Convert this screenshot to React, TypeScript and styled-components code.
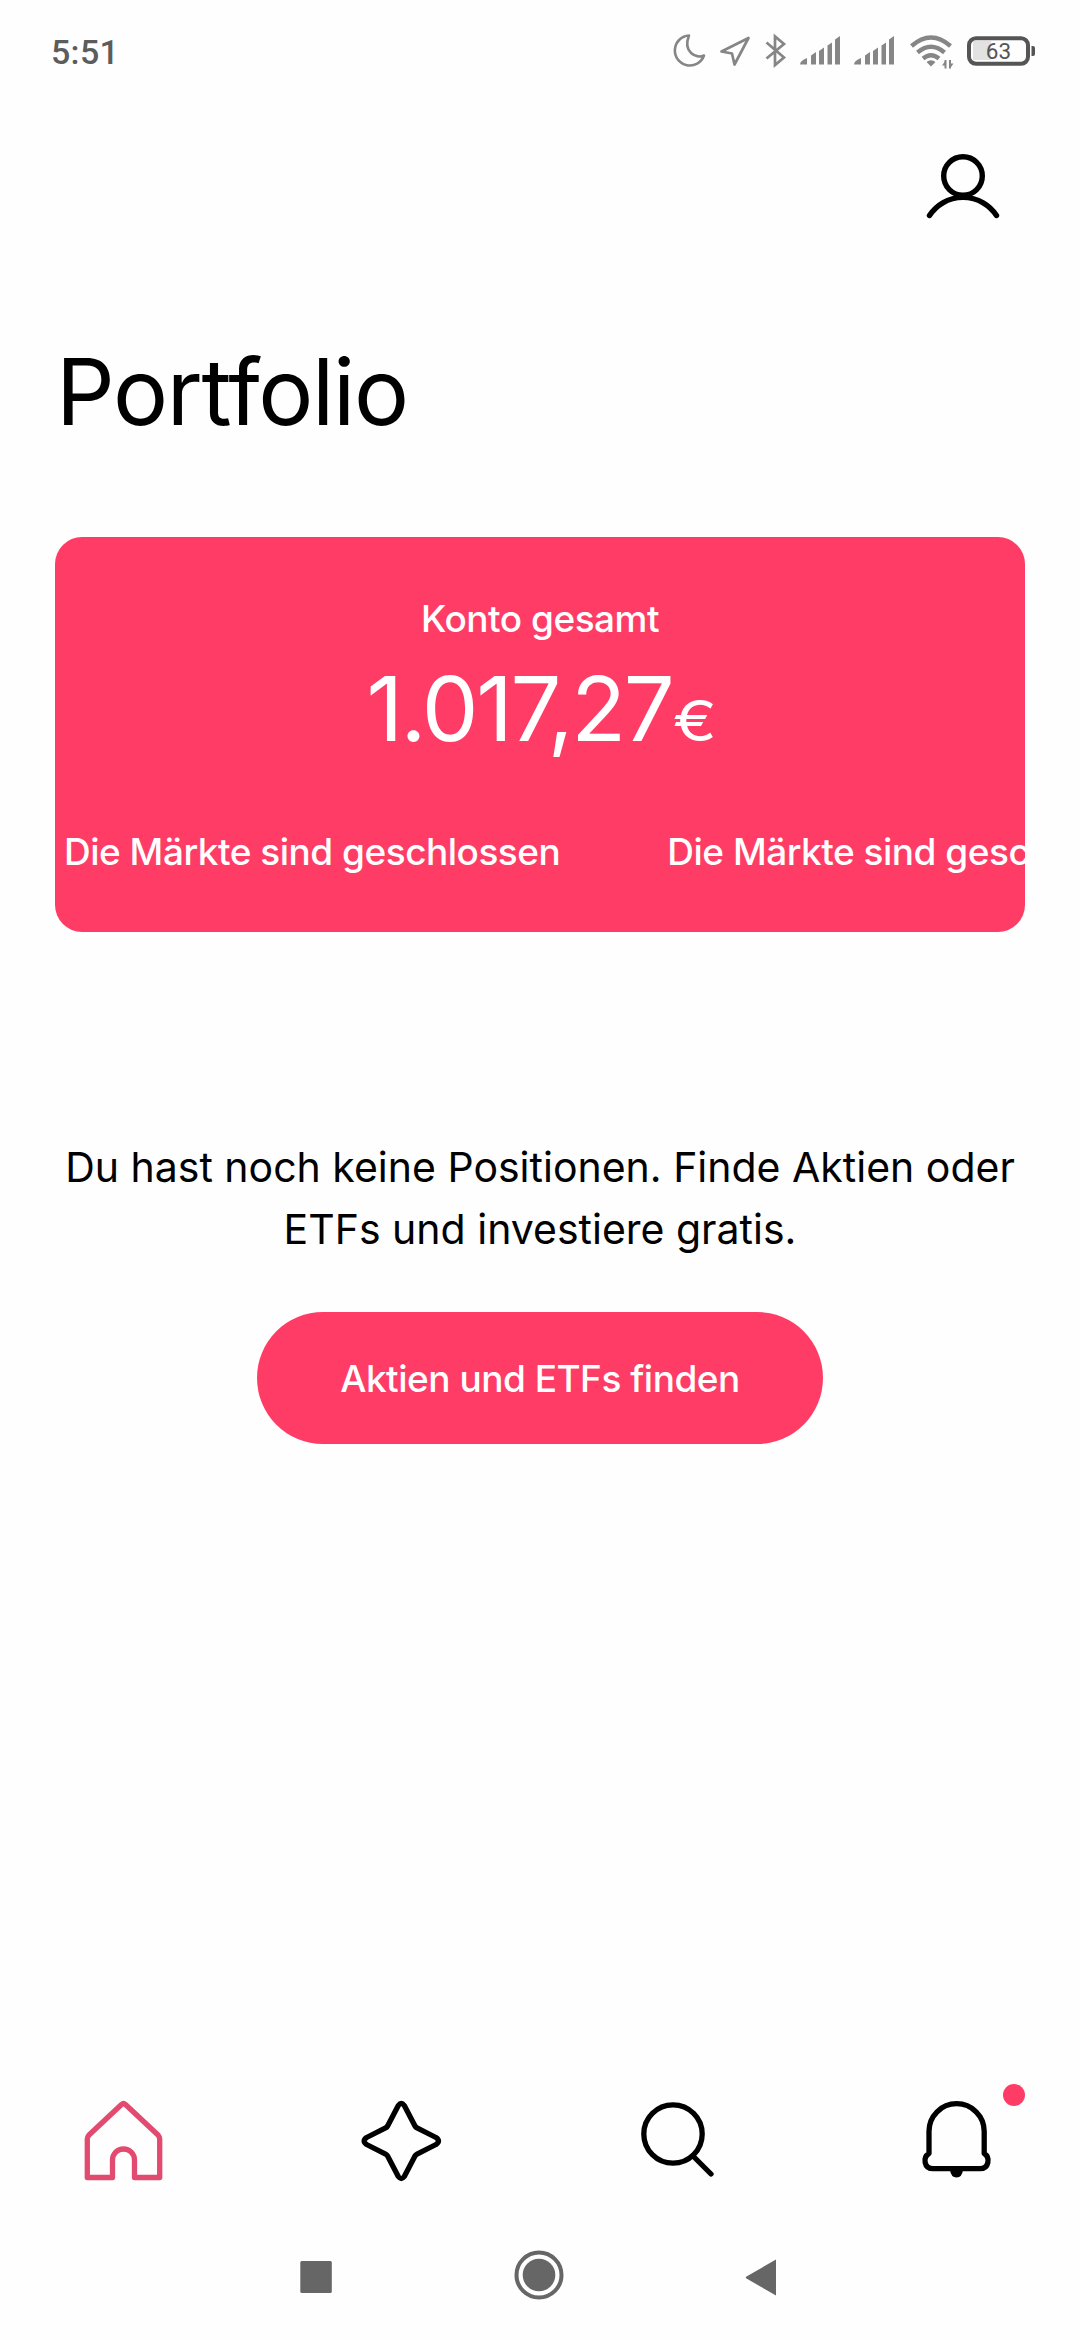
import React from "react";
import styled, { createGlobalStyle } from "styled-components";

const PINK = "#ff3c66";

const GlobalStyle = createGlobalStyle`
  html, body { margin: 0; padding: 0; background: #fefefe; }
  * { box-sizing: border-box; }
  svg { display: block; flex: none; }
`;

const Screen = styled.main`
  width: 1080px;
  height: 2340px;
  display: flex;
  flex-direction: column;
  background: #fefefe;
  color: #000;
  font-family: Inter, "Liberation Sans", sans-serif;
  overflow: hidden;
`;

const StatusBar = styled.header`
  height: 104px;
  padding: 0 45px 0 51px;
  display: flex;
  justify-content: space-between;
  align-items: center;
  flex: none;
`;

const Clock = styled.span`
  font: 500 34px/40px Roboto, sans-serif;
  letter-spacing: 0.3px;
  color: #5c5c5c;
`;

const StatusIcons = styled.div`
  display: flex;
  align-items: center;
  height: 40px;
  margin-bottom: 4px;
`;

const Glyph = styled.svg<{ $gap?: number }>`
  margin-left: ${(p) => p.$gap ?? 0}px;
`;

const TopBar = styled.div`
  height: 168px;
  padding: 46px 79px 0 0;
  display: flex;
  justify-content: flex-end;
  align-items: flex-start;
  flex: none;
`;

const IconButton = styled.button`
  border: 0;
  padding: 0;
  background: none;
  color: inherit;
  display: flex;
`;

const Title = styled.h1`
  margin: 65px 0 0 56px;
  height: 110px;
  font-size: 92px;
  line-height: 110px;
  font-weight: 400;
  letter-spacing: -1.3px;
  flex: none;
`;

const Card = styled.section`
  margin: 90px 55px 0;
  height: 395px;
  border-radius: 27px;
  background: ${PINK};
  color: #fff;
  display: flex;
  flex-direction: column;
  align-items: center;
  overflow: hidden;
  flex: none;
`;

const CardLabel = styled.div`
  margin-top: 58px;
  font-size: 37px;
  line-height: 48px;
  font-weight: 500;
  letter-spacing: -0.5px;
`;

const Amount = styled.div`
  margin-top: 11px;
  height: 110px;
  display: flex;
  align-items: baseline;
  font-size: 90px;
  line-height: 110px;
  font-weight: 400;
  letter-spacing: -2.4px;
`;

const Currency = styled.span`
  font-size: 56px;
  font-weight: 400;
  letter-spacing: 0;
  margin-left: 4px;
  transform: scaleX(1.18);
`;

const Ticker = styled.div`
  margin-top: 64px;
  width: 100%;
  padding-left: 9px;
  display: flex;
  gap: 107px;
  white-space: nowrap;
`;

const TickerItem = styled.span`
  flex: none;
  font-size: 37px;
  line-height: 48px;
  font-weight: 500;
  letter-spacing: -0.5px;
`;

const Empty = styled.section`
  margin-top: 204px;
  display: flex;
  flex-direction: column;
  align-items: center;
  flex: none;
`;

const Message = styled.p`
  margin: 0;
  font-size: 41px;
  line-height: 62px;
  font-weight: 400;
  text-align: center;
  letter-spacing: 0px;
  white-space: nowrap;
`;

const Action = styled.button`
  margin-top: 52px;
  width: 566px;
  height: 132px;
  padding: 1px 0 0;
  border: 0;
  border-radius: 66px;
  background: ${PINK};
  color: #fff;
  font: 500 37px/48px Inter, "Liberation Sans", sans-serif;
  letter-spacing: -0.5px;
`;

const Tabs = styled.nav`
  margin-top: auto;
  height: 120px;
  padding: 8px 80px 0 80px;
  display: flex;
  justify-content: space-between;
  align-items: flex-start;
  flex: none;
`;

const Tab = styled(IconButton)<{ $active?: boolean }>`
  position: relative;
  color: ${(p) => (p.$active ? "#e24a70" : "#000")};
`;

const Badge = styled.span`
  position: absolute;
  left: 89px;
  top: -14px;
  width: 22px;
  height: 22px;
  border-radius: 50%;
  background: ${PINK};
`;

const SystemBar = styled.footer`
  height: 130px;
  padding: 0 303px 0 300px;
  display: flex;
  justify-content: space-between;
  align-items: center;
  flex: none;
`;

const Signal = ({ gap }: { gap: number }) => (
  <Glyph $gap={gap} width="40" height="40" fill="#868686">
    <path d="M0 34.500c0-2.200 2-4 4-5l3-1.500v6.500z" />
    <path d="M11 25.500l5-3.500v12.500h-5zM19 21l5-3.500v17h-5zM27.500 15.500l4.500-3v22h-4.500zM35 9.500l5-3.500v28.500h-5z" />
  </Glyph>
);

export default function App() {
  return (
    <Screen>
      <GlobalStyle />
      <StatusBar>
        <Clock>5:51</Clock>
        <StatusIcons>
          <Glyph width="34" height="40" fill="none" stroke="#868686" strokeWidth="2.600" strokeLinejoin="round">
            <path d="M17 5.500A15 15 0 1 0 32 25.500C24 29 10.500 22 17 5.500Z" />
          </Glyph>
          <Glyph $gap={14} width="31" height="40" fill="none" stroke="#868686" strokeWidth="2.700" strokeLinejoin="round">
            <path d="M28.500 8L14.500 34.500L12 23.500L1.500 21.500Z" />
          </Glyph>
          <Glyph $gap={14} width="22" height="40" fill="none" stroke="#868686" strokeWidth="2.700">
            <path d="M1.500 12.500L19 27.500L10 35V6.500L19 14L1.500 28.500" />
          </Glyph>
          <Signal gap={13} />
          <Signal gap={14} />
          <Glyph $gap={16} width="44" height="40" fill="none" stroke="#868686" strokeWidth="4.400">
            <path d="M1.500 16Q21 -1 40.500 16M7.500 22.500Q21 11 34.500 22.500M13 28.500Q21 22 29 28.500" />
            <path d="M16.500 32Q21 28.500 25.500 32L21 36.500Z" fill="#868686" stroke="none" />
            <path d="M35.500 30v8.500M40 30v8.500" strokeWidth="2" />
            <path d="M32 35.500l3.500-5v5zM43.500 33.500l-3.500 5v-5z" fill="#868686" stroke="none" />
          </Glyph>
          <Glyph $gap={12} width="69" height="40">
            <rect x="7" y="11" width="18" height="19" fill="#e2e2e2" />
            <rect x="3" y="8.200" width="59" height="25.600" rx="7" fill="none" stroke="#555" strokeWidth="4" />
            <path d="M65.500 16h1.500q2 0 2 2v6q0 2-2 2h-1.500z" fill="#555" />
            <text x="32.500" y="29" textAnchor="middle" fontFamily="Roboto, sans-serif" fontSize="22.500" fill="#555">63</text>
          </Glyph>
        </StatusIcons>
      </StatusBar>

      <TopBar>
        <IconButton aria-label="Profil">
          <svg width="76" height="72" viewBox="0 0 76 72" fill="none" stroke="#000" strokeWidth="5.400" strokeLinecap="round">
            <circle cx="38" cy="26" r="19.300" />
            <path d="M4.500 65.500A40 40 0 0 1 71.500 65.500" />
          </svg>
        </IconButton>
      </TopBar>

      <Title>Portfolio</Title>

      <Card>
        <CardLabel>Konto gesamt</CardLabel>
        <Amount>
          1.017,27<Currency>€</Currency>
        </Amount>
        <Ticker>
          <TickerItem>Die Märkte sind geschlossen</TickerItem>
          <TickerItem>Die Märkte sind geschlossen</TickerItem>
        </Ticker>
      </Card>

      <Empty>
        <Message>
          Du hast noch keine Positionen. Finde Aktien oder
          <br />
          ETFs und investiere gratis.
        </Message>
        <Action>Aktien und ETFs finden</Action>
      </Empty>

      <Tabs>
        <Tab $active aria-label="Portfolio">
          <svg width="86" height="90" viewBox="80 2098 86 90" fill="none" stroke="currentColor" strokeWidth="5.300" strokeLinejoin="round">
            <path d="M121.500 2104.500Q123.500 2102.500 125.500 2104.500L158 2135Q159.700 2137 159.700 2139V2177.500H134.500V2160A11 11 0 0 0 112.500 2160V2177.500H87.300V2139Q87.300 2137 89 2135Z" />
          </svg>
        </Tab>
        <Tab aria-label="Entdecken">
          <svg width="86" height="90" viewBox="358 2098 86 90" fill="none" stroke="currentColor" strokeWidth="5.300" strokeLinejoin="round">
            <path d="M398.300 2105.500Q401.300 2101.500 404.300 2105.500L415 2126Q415.800 2127.300 417 2127.900L436 2137.500Q441 2141 436 2144.500L417 2154.100Q415.800 2154.700 415 2156L404.300 2176.500Q401.300 2180.500 398.300 2176.500L387.600 2156Q386.800 2154.700 385.600 2154.100L366.600 2144.500Q361.600 2141 366.600 2137.500L385.600 2127.900Q386.800 2127.300 387.600 2126Z" />
          </svg>
        </Tab>
        <Tab aria-label="Suche">
          <svg width="86" height="90" viewBox="636 2098 86 90" fill="none" stroke="currentColor" strokeWidth="5.300" strokeLinecap="round">
            <circle cx="673" cy="2134" r="29.200" />
            <path d="M693.500 2156.500L711 2174" />
          </svg>
        </Tab>
        <Tab aria-label="Mitteilungen">
          <svg width="86" height="90" viewBox="914 2098 86 90" fill="none" stroke="currentColor" strokeWidth="5.300" strokeLinejoin="round">
            <path d="M929 2153.500V2131.300A27.600 27.600 0 0 1 984.200 2131.300V2153.500C990.500 2157.500 989 2168.700 980 2168.700H933C924 2168.700 922.500 2157.500 929 2153.500Z" />
            <path d="M950 2170H963Q962 2177.500 956.500 2177.500T950 2170Z" fill="currentColor" stroke="none" />
          </svg>
          <Badge />
        </Tab>
      </Tabs>

      <SystemBar>
        <svg width="32" height="38" fill="#666">
          <rect x="0.300" y="5" width="31.500" height="32" rx="1.500" />
        </svg>
        <svg width="50" height="50" fill="#666">
          <circle cx="25" cy="25" r="22.500" fill="none" stroke="#666" strokeWidth="4" />
          <circle cx="25" cy="25" r="16.300" />
        </svg>
        <svg width="32" height="42" fill="#666">
          <path d="M31 5.500V41.500L1.500 24.500Q0 23.500 1.500 22.500L31 5.500Z" />
        </svg>
      </SystemBar>
    </Screen>
  );
}
